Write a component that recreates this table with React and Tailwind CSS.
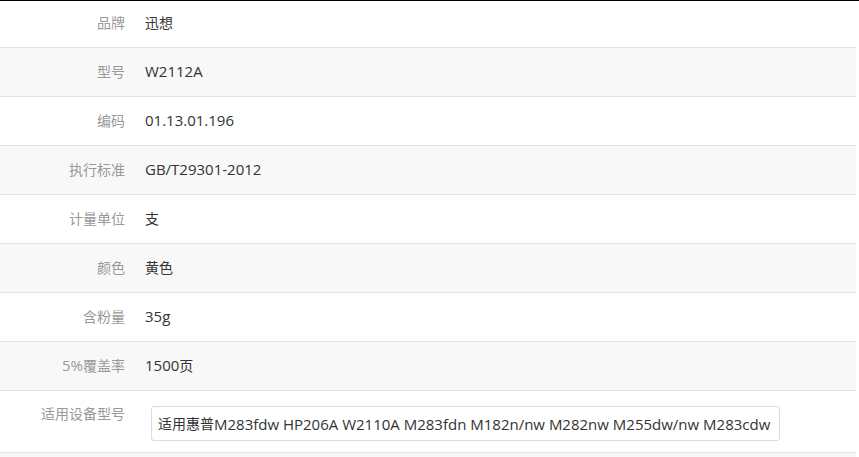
import React from 'react';

const rows = [
    { label: '品牌', value: '迅想' },
    { label: '型号', value: 'W2112A' },
    { label: '编码', value: '01.13.01.196' },
    { label: '执行标准', value: 'GB/T29301-2012' },
    { label: '计量单位', value: '支' },
    { label: '颜色', value: '黄色' },
    { label: '含粉量', value: '35g' },
    { label: '5%覆盖率', value: '1500页' },
];

const font = { fontFamily: '"Open Sans", "Noto Sans CJK SC", sans-serif' };

// latin runs render a touch wider than the CJK ones
const Mixed = ({ text }) =>
    text.split(/([\x20-\x7e]+)/).filter(Boolean).map((part, i) =>
        /^[\x20-\x7e]+$/.test(part)
            ? <span key={i} className="text-[15px]">{part}</span>
            : <span key={i}>{part}</span>
    );

const App = () => {
    return (
        <div className="min-h-screen bg-white border-t border-black text-[14px] leading-5" style={font}>
            <div className="w-[856px]">
                {rows.map((row, i) => (
                    <div
                        key={row.label}
                        className={`flex items-center border-b border-[#e3e3e3] ${i === 0 ? 'h-[47px] pb-[3px]' : 'h-[49px] pb-[1px]'} ${i % 2 === 1 ? 'bg-[#f8f8f8]' : 'bg-white'}`}
                    >
                        <div className="w-[125px] text-right text-[#999]"><Mixed text={row.label} /></div>
                        <div className="ml-5 text-[#333]"><Mixed text={row.value} /></div>
                    </div>
                ))}

                {/* 适用设备型号 */}
                <div className="flex items-start h-[62px] border-b border-[#e3e3e3] bg-white">
                    <div className="w-[125px] text-right text-[#999] pt-[13px]">适用设备型号</div>
                    <div className="ml-[26px] mt-[15px] w-[629px] h-[35px] border border-[#dcdcdc] rounded-[3px] flex items-center px-[6px] text-[#333] whitespace-nowrap overflow-hidden">
                        <Mixed text="适用惠普M283fdw HP206A W2110A M283fdn M182n/nw M282nw M255dw/nw M283cdw" />
                    </div>
                </div>
                <div className="h-[6px] bg-[#f8f8f8]"></div>
            </div>
        </div>
    );
};

export default App;
